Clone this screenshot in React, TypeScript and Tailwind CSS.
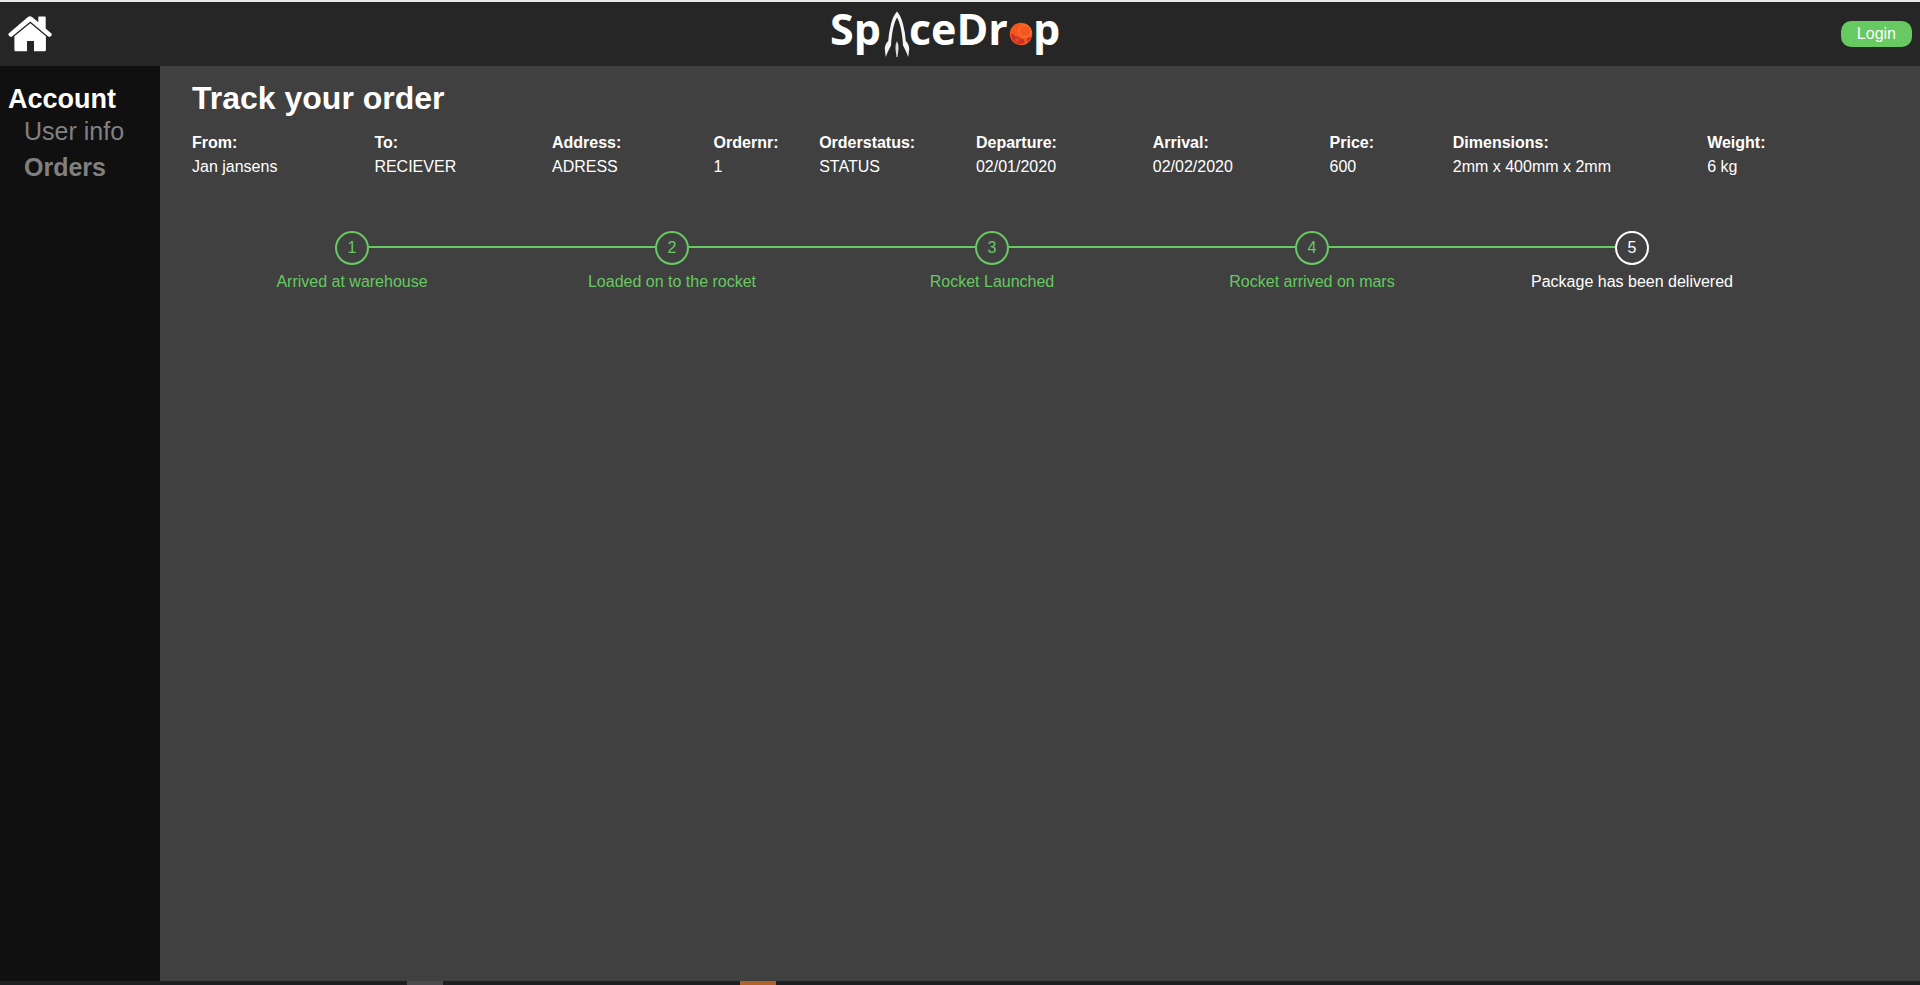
const details = [
  { label: "From:", value: "Jan jansens", width: "w-[11.4%]" },
  { label: "To:", value: "RECIEVER", width: "w-[11.1%]" },
  { label: "Address:", value: "ADRESS", width: "w-[10.1%]" },
  { label: "Ordernr:", value: "1", width: "w-[6.6%]" },
  { label: "Orderstatus:", value: "STATUS", width: "w-[9.8%]" },
  { label: "Departure:", value: "02/01/2020", width: "w-[11.05%]" },
  { label: "Arrival:", value: "02/02/2020", width: "w-[11.05%]" },
  { label: "Price:", value: "600", width: "w-[7.7%]" },
  { label: "Dimensions:", value: "2mm x 400mm x 2mm", width: "w-[15.9%]" },
  { label: "Weight:", value: "6 kg", width: "w-[5.3%]" },
];

const steps = [
  { text: "Arrived at warehouse", done: true },
  { text: "Loaded on to the rocket", done: true },
  { text: "Rocket Launched", done: true },
  { text: "Rocket arrived on mars", done: true },
  { text: "Package has been delivered", done: false },
];

function HomeIcon() {
  return (
    <svg className="h-9 w-11" viewBox="0 0 44 36" fill="#fff" aria-hidden="true">
      <path d="M22 0.3 Q23 0.3 24 1.1 L30.3 6.3 V1 Q30.3 0.5 31 0.5 H37 Q37.7 0.5 37.7 1.2 V12.6 L43.4 17.4 Q44.3 18.4 43.4 19.5 L42.4 20.6 Q41.3 21.4 40.2 20.5 L22.3 5.6 L4 20.5 Q2.8 21.4 1.8 20.5 L0.7 19.3 Q0 18.2 0.9 17.3 L20 1.1 Q21 0.3 22 0.3 Z" />
      <path d="M22.3 7.2 L37.9 20.2 V34 Q37.9 35.2 36.8 35.2 H26 V25.1 H19 V35.2 H7.6 Q6.4 35.2 6.4 34 V20.2 Z" />
    </svg>
  );
}

function Logo() {
  return (
    <svg
      className="h-16 w-[234px] overflow-visible font-['Open_Sans','Noto_Sans',sans-serif] text-[43px] leading-none font-bold"
      viewBox="830 2 234 64"
      fill="#fff"
      role="img"
      aria-label="SpaceDrop"
    >
      <text x="831" y="45">Sp</text>
      <path
        fill="#f4f4f4"
        d="M898 11.5 Q902 16 904 24 Q906.3 33 906.8 41 Q910.2 44.5 910.2 49 L909.3 57 L907 51.5 L904 45.5 Q903.3 33 901 25 Q899.6 20 898 17.5 Q896.4 20 895 25 Q892.7 33 892 45.5 L889 51.5 L886.7 57 L885.8 49 Q885.8 44.5 889.2 41 Q889.7 33 892 24 Q894 16 898 11.5 Z"
      />
      <path fill="#ddd" d="M898 41 Q899.7 44 899.5 49 L898.5 57 H897.5 L896.5 49 Q896.3 44 898 41 Z" />
      <text x="910" y="45">ceDr</text>
      <circle cx="1022" cy="34" r="11.2" fill="#f4581f" />
      <path fill="#c93328" d="M1012 34 q3 -1 4 2 q4 0 5 3 q4 -1 5 3 q-3 3.5 -8 1.5 q-6 -3 -6 -9.5 Z M1028 38 l4 -1 q-1 4 -4 5 Z" />
      <circle cx="1026" cy="31" r="6" fill="none" stroke="#ff8a5c" strokeWidth="0.7" />
      <circle cx="1018" cy="40" r="1.8" fill="#f04e22" />
      <text x="1034" y="45">p</text>
    </svg>
  );
}

export default function App() {
  return (
    <div className="flex min-h-screen flex-col bg-[#404040] font-['Liberation_Sans',Arial,sans-serif] text-base text-white">
      <header className="flex h-[66px] shrink-0 items-center justify-between border-t-2 border-[#e6e8ea] bg-[#262626] px-2">
        <a href="#home" aria-label="Home">
          <HomeIcon />
        </a>
        <a href="#home">
          <Logo />
        </a>
        <button type="button" className="h-[26px] rounded-[10px] bg-[#66c961] px-4 leading-6">
          Login
        </button>
      </header>

      <div className="flex flex-1">
        <nav className="w-40 shrink-0 bg-[#101010] px-2 pt-[17px]">
          <h2 className="text-[27px] leading-8 font-bold">Account</h2>
          <ul className="pl-4 text-[25px] text-[#808080]">
            <li><a href="#user" className="block leading-8">User info</a></li>
            <li><a href="#orders" className="block leading-10 font-bold">Orders</a></li>
          </ul>
        </nav>

        <main className="min-w-0 flex-1 pt-3 pr-32 pl-8">
          <h1 className="text-[32px] leading-10 font-bold">Track your order</h1>
          <table className="mt-[13px] w-full table-fixed text-left leading-6 whitespace-nowrap">
            <thead>
              <tr>
                {details.map((d) => (
                  <th key={d.label} className={`${d.width} p-0 font-bold`}>{d.label}</th>
                ))}
              </tr>
            </thead>
            <tbody>
              <tr>
                {details.map((d) => (
                  <td key={d.label} className="p-0">{d.value}</td>
                ))}
              </tr>
            </tbody>
          </table>

          <ol className="mt-[52px] grid grid-cols-5">
            {steps.map((step, i) => (
              <li key={step.text} className={step.done ? "text-center text-[#66c961]" : "text-center"}>
                <div className="flex items-center">
                  <span className={i > 0 ? "mb-[2px] h-[2px] flex-1 bg-[#66c961]" : "flex-1"} />
                  <span className="flex size-[34px] items-center justify-center rounded-full border-2 border-current leading-6">
                    {i + 1}
                  </span>
                  <span className={i < steps.length - 1 ? "mb-[2px] h-[2px] flex-1 bg-[#66c961]" : "flex-1"} />
                </div>
                <p className="mt-[5px] leading-6">{step.text}</p>
              </li>
            ))}
          </ol>
        </main>
      </div>

      <footer className="flex h-1 shrink-0 bg-[#1e1f23]">
        <span className="ml-[21.2%] w-9 bg-[#4b4b50]" />
        <span className="ml-[15.45%] w-9 bg-[#ad632b]" />
      </footer>
    </div>
  );
}
